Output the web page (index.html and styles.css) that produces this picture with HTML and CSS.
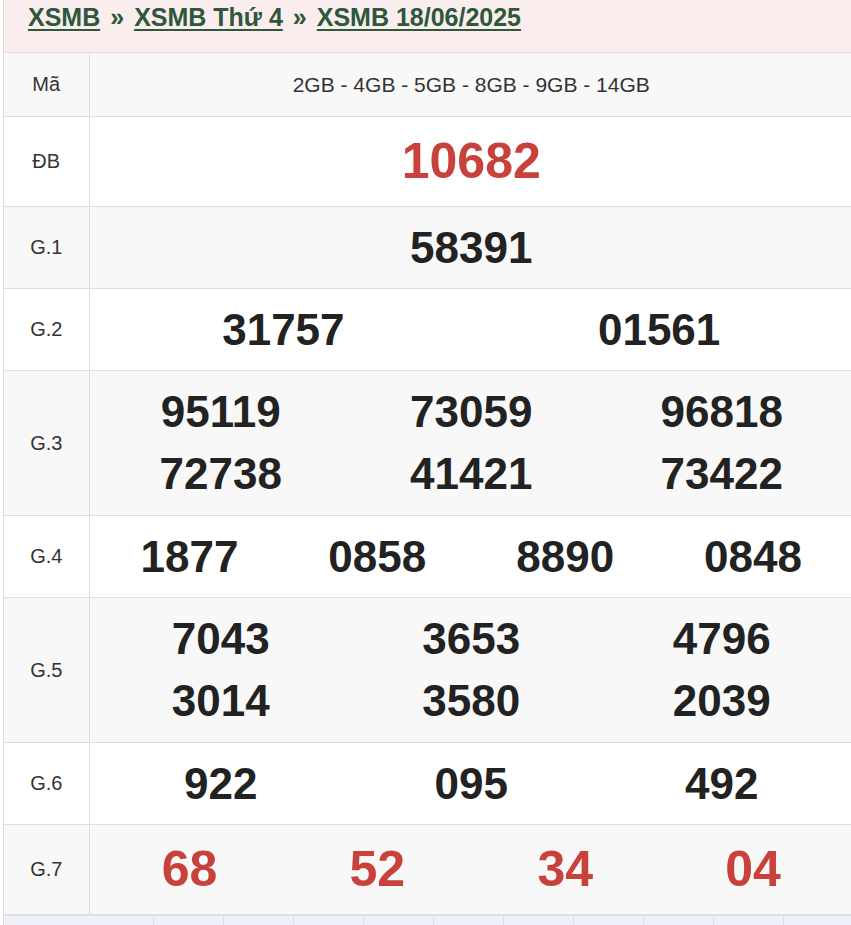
FILE: index.html
```html
<!DOCTYPE html>
<html lang="vi">
<head>
<meta charset="utf-8">
<title>XSMB 18/06/2025</title>
<link rel="stylesheet" href="styles.css">
</head>
<body>
<div class="page">
  <div class="crumbs">
    <a href="#">XSMB</a><span class="sep">»</span><a href="#">XSMB Thứ 4</a><span class="sep">»</span><a href="#">XSMB 18/06/2025</a>
  </div>
  <table class="kq">
    <tr class="head">
      <td class="lbl">Mã</td>
      <td class="codes">2GB - 4GB - 5GB - 8GB - 9GB - 14GB</td>
    </tr>
    <tr class="big">
      <td class="lbl">ĐB</td>
      <td class="nums"><div class="grid c1"><span class="red">10682</span></div></td>
    </tr>
    <tr>
      <td class="lbl">G.1</td>
      <td class="nums"><div class="grid c1"><span>58391</span></div></td>
    </tr>
    <tr>
      <td class="lbl">G.2</td>
      <td class="nums"><div class="grid c2"><span>31757</span><span>01561</span></div></td>
    </tr>
    <tr class="two">
      <td class="lbl">G.3</td>
      <td class="nums"><div class="grid c3"><span>95119</span><span>73059</span><span>96818</span><span>72738</span><span>41421</span><span>73422</span></div></td>
    </tr>
    <tr>
      <td class="lbl">G.4</td>
      <td class="nums"><div class="grid c4"><span>1877</span><span>0858</span><span>8890</span><span>0848</span></div></td>
    </tr>
    <tr class="two">
      <td class="lbl">G.5</td>
      <td class="nums"><div class="grid c3"><span>7043</span><span>3653</span><span>4796</span><span>3014</span><span>3580</span><span>2039</span></div></td>
    </tr>
    <tr>
      <td class="lbl">G.6</td>
      <td class="nums"><div class="grid c3"><span>922</span><span>095</span><span>492</span></div></td>
    </tr>
    <tr class="big">
      <td class="lbl">G.7</td>
      <td class="nums"><div class="grid c4"><span class="red">68</span><span class="red">52</span><span class="red">34</span><span class="red">04</span></div></td>
    </tr>
  </table>
  <table class="next">
    <tr>
      <td class="first"></td><td></td><td></td><td></td><td></td><td></td><td></td><td></td><td></td><td></td><td></td>
    </tr>
  </table>
</div>
</body>
</html>
```

FILE: styles.css
```css
* { box-sizing: border-box; }
html, body {
  margin: 0;
  padding: 0;
  background: #ffffff;
  font-family: "Liberation Sans", Arial, sans-serif;
  color: #222;
}
.page {
  margin-left: 3px;
  width: 850px;
  overflow: hidden;
  border-left: 1px solid #dcdcdc;
}
.crumbs {
  height: 53px;
  padding: 3px 0 0 24px;
  background: #f9eded;
  font-size: 25px;
  font-weight: bold;
  line-height: 29px;
  color: #2e573b;
  border-bottom: 1px solid #e6dcdc;
}
.crumbs a {
  color: #2e573b;
  text-decoration: underline;
  text-underline-offset: 3px;
  text-decoration-thickness: 2px;
}
.crumbs .sep {
  display: inline-block;
  padding: 0 10px 0 10px;
  color: #2e573b;
}
.kq {
  width: 850px;
  border-collapse: collapse;
  table-layout: fixed;
}
.kq td {
  border-top: 1px solid #dedede;
  border-right: 1px solid #dedede;
  text-align: center;
  vertical-align: middle;
}
.kq tr:first-child td { border-top: none; }
.kq tr:nth-child(odd) td { background: #f8f8f8; }
.kq tr:nth-child(even) td { background: #ffffff; }
.kq .lbl {
  width: 85px;
  font-size: 20px;
  color: #333;
  line-height: 23px;
}
.kq .head td {
  padding: 20px 0 20px 0;
}
.kq .codes {
  font-size: 21px;
  line-height: 23px;
  color: #333;
}
.kq .nums {
  padding: 10px 6px 10px 6px;
}
.grid {
  display: grid;
}
.grid.c1 { grid-template-columns: 1fr; }
.grid.c2 { grid-template-columns: repeat(2, 1fr); }
.grid.c3 { grid-template-columns: repeat(3, 1fr); }
.grid.c4 { grid-template-columns: repeat(4, 1fr); }
.grid span {
  font-size: 44px;
  font-weight: bold;
  line-height: 61px;
  color: #222;
  text-align: center;
}
.kq .two .grid span { line-height: 62px; }
.kq .big .grid span {
  font-size: 50px;
  line-height: 69px;
}
.grid span.red { color: #c8413a; }
.next {
  width: 850px;
  border-collapse: collapse;
  table-layout: fixed;
  border-top: 2px solid #e0e0e0;
}
.next td {
  width: 70px;
  height: 30px;
  background: #eef1fa;
  border-right: 1px solid #dde0ea;
}
.next td.first { width: 149px; }
```
